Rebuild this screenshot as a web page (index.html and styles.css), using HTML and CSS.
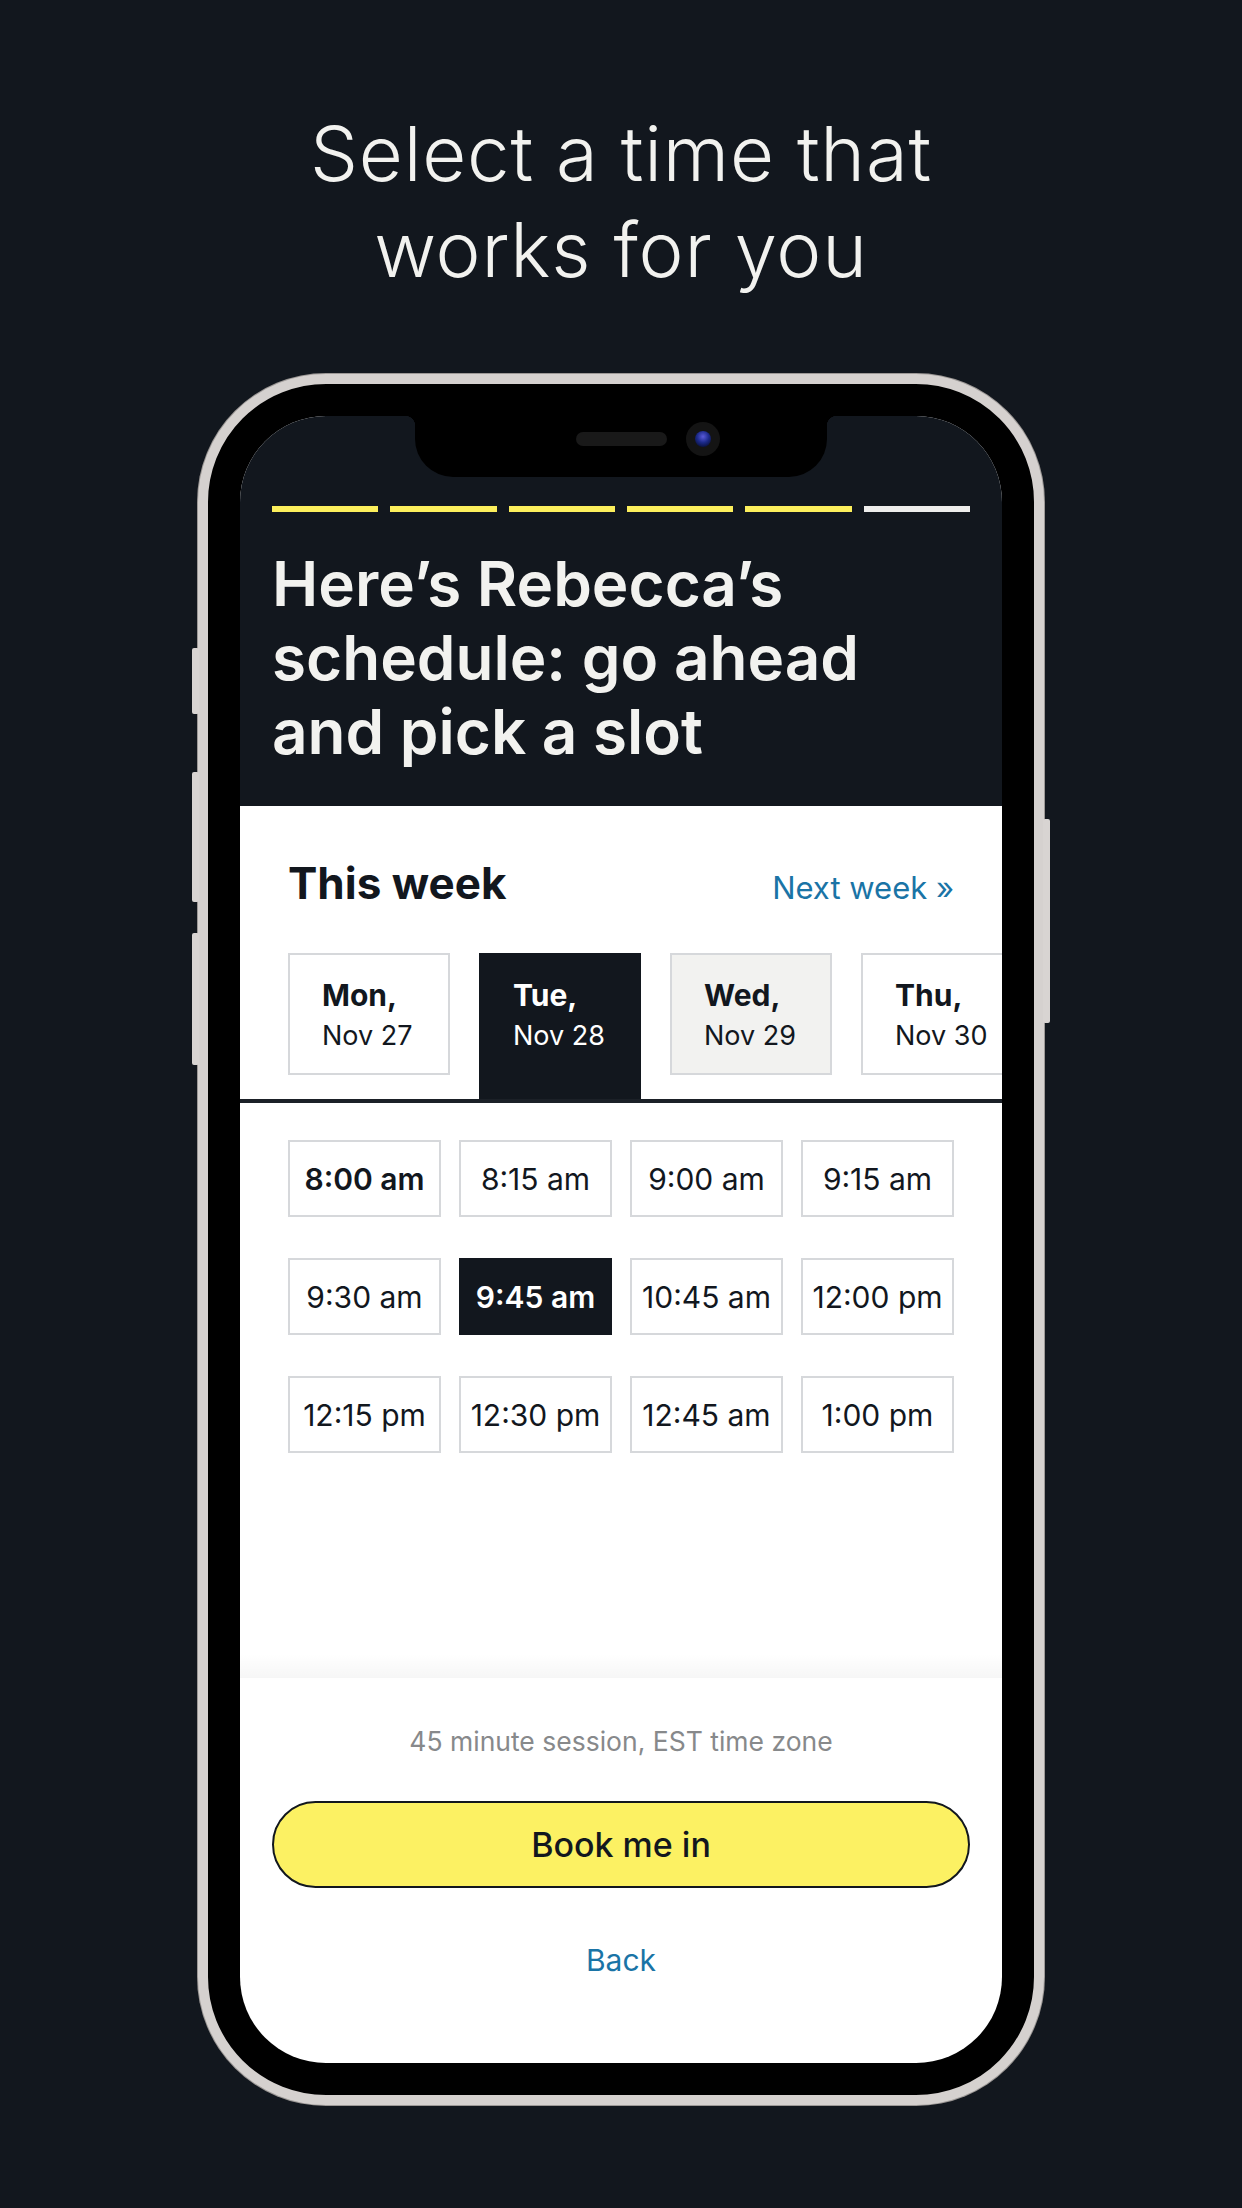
FILE: index.html
```html
<!DOCTYPE html>
<html>
<head>
    <title>Book a session</title>
    <meta name="viewport" content="width=device-width, initial-scale=1.0">
    <link rel="stylesheet" href="styles.css">
</head>
<body>
    <div class="page">
        <h1 class="title">Select a time that<br>works for you</h1>

        <div class="phone">
            <div class="side-btn side-mute"></div>
            <div class="side-btn side-vol-up"></div>
            <div class="side-btn side-vol-down"></div>
            <div class="side-btn side-power"></div>

            <div class="screen">
                <!-- notch -->
                <div class="notch">
                    <div class="speaker"></div>
                    <div class="camera"><div class="lens"></div></div>
                </div>

                <div class="header">
                    <div class="steps">
                        <span class="step done"></span>
                        <span class="step done"></span>
                        <span class="step done"></span>
                        <span class="step done"></span>
                        <span class="step done"></span>
                        <span class="step"></span>
                    </div>
                    <h2 class="headline">Here’s Rebecca’s schedule: go ahead and pick a slot</h2>
                </div>

                <div class="week">
                    <div class="week-top">
                        <h3 class="week-title">This week</h3>
                        <a class="link next-week">Next week »</a>
                    </div>
                    <div class="days">
                        <div class="day">
                            <div class="day-name">Mon,</div>
                            <div class="day-date">Nov 27</div>
                        </div>
                        <div class="day active">
                            <div class="day-name">Tue,</div>
                            <div class="day-date">Nov 28</div>
                        </div>
                        <div class="day muted">
                            <div class="day-name">Wed,</div>
                            <div class="day-date">Nov 29</div>
                        </div>
                        <div class="day">
                            <div class="day-name">Thu,</div>
                            <div class="day-date">Nov 30</div>
                        </div>
                    </div>
                </div>

                <div class="slots">
                    <div class="slot first">8:00 am</div>
                    <div class="slot">8:15 am</div>
                    <div class="slot">9:00 am</div>
                    <div class="slot">9:15 am</div>
                    <div class="slot">9:30 am</div>
                    <div class="slot selected">9:45 am</div>
                    <div class="slot">10:45 am</div>
                    <div class="slot">12:00 pm</div>
                    <div class="slot">12:15 pm</div>
                    <div class="slot">12:30 pm</div>
                    <div class="slot">12:45 am</div>
                    <div class="slot">1:00 pm</div>
                </div>

                <div class="footer">
                    <p class="session-info">45 minute session, EST time zone</p>
                    <button class="book-btn">Book me in</button>
                    <a class="link back">Back</a>
                </div>
            </div>
        </div>
    </div>
</body>
</html>
```

FILE: styles.css
```css
body {
    margin: 0;
    background-color: #12171e;
    font-family: Inter, "Liberation Sans", sans-serif;
    color: #12171e;
}
.page {
    width: 1242px;
    height: 2208px;
    display: flex;
    flex-direction: column;
    align-items: center;
    overflow: hidden;
}
.title {
    margin: 105px 0 0 0;
    font-size: 76px;
    font-weight: 300;
    line-height: 96px;
    color: #f2f2ef;
    text-align: center;
    letter-spacing: 0.8px;
}

/* phone frame */
.phone {
    position: relative;
    margin-top: 77px;
    width: 762px;
    padding: 32px;
    background: #000;
    border: 10px solid #d5d1cf;
    border-radius: 128px;
    box-shadow: 0 0 0 1px #9c9896;
}
.side-btn {
    position: absolute;
    width: 7px;
    background: #d8d4d2;
    border-radius: 2px;
}
.side-mute { left: -16px; top: 264px; height: 66px; }
.side-vol-up { left: -16px; top: 388px; height: 130px; }
.side-vol-down { left: -16px; top: 549px; height: 132px; }
.side-power { right: -16px; top: 435px; height: 204px; }

.screen {
    position: relative;
    height: 1647px;
    background: #fff;
    border-radius: 86px;
    overflow: hidden;
    display: flex;
    flex-direction: column;
}
.notch {
    position: absolute;
    top: 0;
    left: 175px;
    width: 412px;
    height: 61px;
    background: #000;
    border-radius: 0 0 38px 38px;
    display: flex;
    justify-content: center;
    padding-top: 16px;
    box-sizing: border-box;
}
.notch::before,
.notch::after {
    content: "";
    position: absolute;
    top: 0;
    width: 10px;
    height: 10px;
}
.notch::before {
    left: -10px;
    background: radial-gradient(circle at 0 100%, transparent 10px, #000 10.5px);
}
.notch::after {
    right: -10px;
    background: radial-gradient(circle at 100% 100%, transparent 10px, #000 10.5px);
}
.speaker {
    width: 91px;
    height: 14px;
    background: #191919;
    border-radius: 7px;
}
.camera {
    position: absolute;
    top: 6px;
    left: 271px;
    width: 34px;
    height: 34px;
    border-radius: 50%;
    background: #141414;
    display: flex;
    justify-content: center;
    align-items: center;
}
.lens {
    width: 16px;
    height: 16px;
    border-radius: 50%;
    background: radial-gradient(circle at 50% 35%, #5a5ad8 0%, #1c2a8a 45%, #0a1240 80%);
}

/* dark header */
.header {
    background: #12171e;
    padding: 90px 32px 37px;
}
.steps {
    display: flex;
    gap: 12px;
}
.step {
    flex: 1;
    height: 6px;
    background: #eeeeec;
}
.step.done {
    background: #fcef5c;
}
.headline {
    margin: 35px 0 0 0;
    font-size: 62px;
    font-weight: 600;
    line-height: 74px;
    color: #f2f2ef;
}

/* week selector */
.week {
    padding: 50px 48px 0;
    border-bottom: 4px solid #1b2027;
}
.week-top {
    display: flex;
    justify-content: space-between;
    align-items: baseline;
}
.week-title {
    margin: 0;
    font-size: 44px;
    font-weight: 700;
    line-height: 54px;
}
.link {
    color: #1a74a6;
    cursor: pointer;
}
.next-week {
    font-size: 31px;
}
.days {
    display: flex;
    align-items: flex-start;
    gap: 29px;
    margin-top: 43px;
}
.day {
    flex-shrink: 0;
    width: 162px;
    height: 122px;
    box-sizing: border-box;
    border: 2px solid #d6d8db;
    padding: 23px 0 0 32px;
}
.day.active {
    height: 146px;
    background: #12171e;
    border-color: #12171e;
    color: #fff;
}
.day.muted {
    background: #f2f2f0;
}
.day-name {
    font-size: 30px;
    font-weight: 700;
    line-height: 34px;
}
.day-date {
    margin-top: 7px;
    font-size: 27px;
    line-height: 34px;
}

/* time slots */
.slots {
    display: grid;
    grid-template-columns: repeat(4, 1fr);
    column-gap: 18px;
    row-gap: 41px;
    padding: 37px 48px 0;
}
.slot {
    height: 77px;
    box-sizing: border-box;
    border: 2px solid #d6d8db;
    display: flex;
    justify-content: center;
    align-items: center;
    font-size: 30px;
    white-space: nowrap;
}
.slot.first {
    font-weight: 600;
}
.slot.selected {
    background: #12171e;
    border-color: #12171e;
    color: #fff;
    font-weight: 600;
}

/* footer */
.footer {
    position: relative;
    margin-top: auto;
    height: 385px;
    box-sizing: border-box;
    padding: 45px 32px 0;
    display: flex;
    flex-direction: column;
    align-items: center;
}
.footer::before {
    content: "";
    position: absolute;
    left: 0;
    right: 0;
    top: -24px;
    height: 24px;
    background: linear-gradient(to bottom, rgba(0, 0, 0, 0), rgba(0, 0, 0, 0.035));
}
.session-info {
    margin: 0;
    font-size: 26.5px;
    line-height: 36px;
    color: #87898b;
}
.book-btn {
    margin-top: 42px;
    width: 100%;
    height: 87px;
    border: 2px solid #12171e;
    border-radius: 9999px;
    background: #fcf163;
    font-family: inherit;
    font-size: 34px;
    font-weight: 500;
    color: #12171e;
    cursor: pointer;
}
.back {
    margin-top: 52px;
    font-size: 30px;
    line-height: 40px;
}
```
